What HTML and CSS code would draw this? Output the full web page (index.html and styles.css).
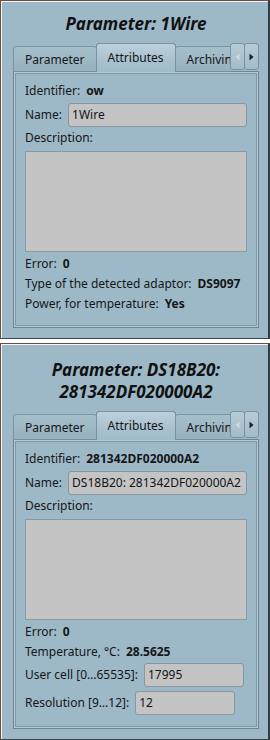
FILE: index.html
```html
<!DOCTYPE html>
<html lang="en">
<head>
<meta charset="utf-8">
<title>Parameters</title>
<link rel="stylesheet" href="styles.css">
</head>
<body>
<section class="panel">
  <h1 class="title">Parameter: 1Wire</h1>
  <div class="tabbar">
    <div class="tabs">
      <div class="tab">Parameter</div>
      <div class="tab tab--active">Attributes</div>
      <div class="tab">Archiving</div>
    </div>
    <div class="scroller">
      <div class="scroll-btn scroll-btn--disabled"><svg width="5" height="8" viewBox="0 0 5 8"><path d="M4.5 0.5 L0.5 4 L4.5 7.5 Z"/></svg></div>
      <div class="scroll-btn"><svg width="5" height="8" viewBox="0 0 5 8"><path d="M0.5 0.5 L4.5 4 L0.5 7.5 Z"/></svg></div>
    </div>
  </div>
  <div class="pane">
    <div class="row"><span>Identifier:</span><b>ow</b></div>
    <div class="row row--field"><span>Name:</span><div class="field field--wide">1Wire</div></div>
    <div class="row row--caption">Description:</div>
    <div class="textarea"></div>
    <div class="row row--after-box"><span>Error:</span><b>0</b></div>
    <div class="row"><span>Type of the detected adaptor:</span><b>DS9097</b></div>
    <div class="row"><span>Power, for temperature:</span><b>Yes</b></div>
  </div>
</section>

<section class="panel panel--second">
  <h1 class="title">Parameter: DS18B20: 281342DF020000A2</h1>
  <div class="tabbar">
    <div class="tabs">
      <div class="tab">Parameter</div>
      <div class="tab tab--active">Attributes</div>
      <div class="tab">Archiving</div>
    </div>
    <div class="scroller">
      <div class="scroll-btn scroll-btn--disabled"><svg width="5" height="8" viewBox="0 0 5 8"><path d="M4.5 0.5 L0.5 4 L4.5 7.5 Z"/></svg></div>
      <div class="scroll-btn"><svg width="5" height="8" viewBox="0 0 5 8"><path d="M0.5 0.5 L4.5 4 L0.5 7.5 Z"/></svg></div>
    </div>
  </div>
  <div class="pane">
    <div class="row"><span>Identifier:</span><b>281342DF020000A2</b></div>
    <div class="row row--field"><span>Name:</span><div class="field field--wide">DS18B20: 281342DF020000A2</div></div>
    <div class="row row--caption">Description:</div>
    <div class="textarea"></div>
    <div class="row row--after-box"><span>Error:</span><b>0</b></div>
    <div class="row"><span>Temperature, °C:</span><b>28.5625</b></div>
    <div class="row row--field row--tight"><span>User cell [0…65535]:</span><div class="field">17995</div></div>
    <div class="row row--field row--spaced"><span>Resolution [9…12]:</span><div class="field">12</div></div>
  </div>
</section>
</body>
</html>
```

FILE: styles.css
```css
* {
  box-sizing: border-box;
}

html,
body {
  margin: 0;
  padding: 0;
}

body {
  width: 270px;
  background: #ffffff;
  font-family: "Noto Sans", "Open Sans", sans-serif;
  font-size: 12px;
  color: #161616;
}

.panel {
  background: #9db9c8;
  border-style: solid;
  border-width: 1px 2px 1px 1px;
  border-color: #6e4c40 #2f3c43 #3a4850 #6e4c40;
  box-shadow: inset 1px 1px 0 #f2f6f8;
  padding: 12px 9px 10px 12px;
}

.panel + .panel {
  margin-top: 4px;
}

.panel--second {
  padding-top: 15px;
}

.title {
  margin: 0;
  font-size: 17px;
  line-height: 22px;
  font-weight: 700;
  font-style: italic;
  text-align: center;
  color: #111111;
  padding: 0 10px;
}

.tabbar {
  position: relative;
  z-index: 1;
  display: flex;
  height: 29px;
  margin-top: 8px;
  margin-bottom: -1px;
}

.tabs {
  flex: 1;
  min-width: 0;
  display: flex;
  align-items: flex-end;
  overflow: hidden;
}

.tab {
  flex-shrink: 0;
  height: 26px;
  padding: 0 11px;
  display: flex;
  align-items: center;
  border: 1px solid #7a92a0;
  border-radius: 3px 3px 0 0;
  background: linear-gradient(#a5bfcc, #97b1bf);
  white-space: nowrap;
}

.tab + .tab {
  margin-left: -1px;
}

.tab--active {
  position: relative;
  z-index: 1;
  height: 29px;
  padding-bottom: 2px;
  border-bottom: none;
  background: linear-gradient(#bcd1dc, #a8c1ce 60%, #9fbbca);
}

.scroller {
  display: flex;
  align-self: flex-start;
  height: 27px;
}

.scroll-btn {
  width: 15px;
  height: 27px;
  display: flex;
  align-items: center;
  justify-content: center;
  border: 1px solid #7a92a0;
  border-radius: 3px;
  background: linear-gradient(#b6ccd7, #a3bcc9);
}

.scroll-btn + .scroll-btn {
  margin-left: -1px;
}

.scroll-btn svg {
  display: block;
  fill: #1e1e1e;
}

.scroll-btn--disabled svg {
  fill: #d0d9de;
}

.pane {
  border: 1px solid #6f8796;
  box-shadow: inset 0 0 0 1px #b2c8d3, inset 0 0 0 2px #8299a6;
  padding: 9px 11px 13px 11px;
  display: flex;
  flex-direction: column;
}

.row {
  display: flex;
  align-items: center;
  gap: 6px;
  height: 20px;
  line-height: 20px;
  white-space: nowrap;
}

.row b {
  font-weight: 700;
}

.row--field {
  height: 24px;
  margin-top: 2px;
}

.row--caption {
  margin-top: 1px;
}

.row--tight {
  margin-top: 1px;
}

.row--spaced {
  margin-top: 4px;
}

.row--after-box {
  margin-top: 2px;
}

.field {
  width: 100px;
  height: 24px;
  line-height: 22px;
  padding: 0 3px;
  background: #c4c4c4;
  border: 1px solid #8796a0;
  border-radius: 3px;
  color: #141414;
  overflow: hidden;
  white-space: nowrap;
}

.field--wide {
  flex: 1;
  width: auto;
  min-width: 0;
}

.textarea {
  height: 101px;
  margin-top: 3px;
  background: #c4c4c4;
  border: 1px solid #8a9aa4;
}
```
